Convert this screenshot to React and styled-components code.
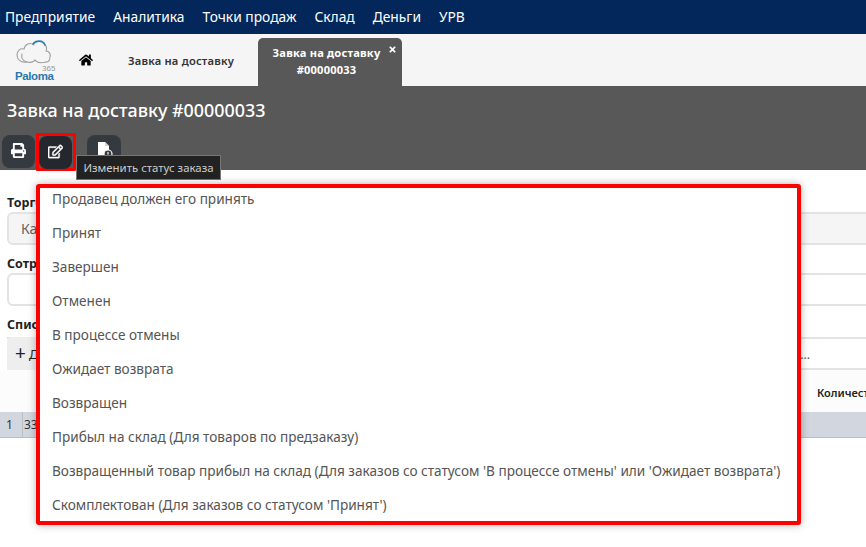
import styled, { createGlobalStyle } from 'styled-components';
import { FaHome, FaPrint, FaRegEdit, FaTimes } from 'react-icons/fa';

const NAV_ITEMS = ['Предприятие', 'Аналитика', 'Точки продаж', 'Склад', 'Деньги', 'УРВ'];

const STATUSES = [
  'Продавец должен его принять',
  'Принят',
  'Завершен',
  'Отменен',
  'В процессе отмены',
  'Ожидает возврата',
  'Возвращен',
  'Прибыл на склад (Для товаров по предзаказу)',
  "Возвращенный товар прибыл на склад (Для заказов со статусом 'В процессе отмены' или 'Ожидает возврата')",
  "Скомплектован (Для заказов со статусом 'Принят')",
];

const GlobalStyle = createGlobalStyle`
  html, body {
    margin: 0;
    height: 100%;
    background: #fff;
    overflow: hidden;
  }

  body {
    font-family: 'Noto Sans', 'Open Sans', sans-serif;
  }

  * {
    box-sizing: border-box;
  }
`;

const Page = styled.div`
  position: relative;
  width: 866px;
  height: 547px;
  overflow: hidden;
`;

const TopNav = styled.nav`
  display: flex;
  align-items: center;
  gap: 18px;
  height: 34px;
  padding: 0 5px;
  background: #03275a;
`;

const NavLink = styled.a`
  color: #fff;
  font-size: 13.8px;
  line-height: 1;
`;

const TabBar = styled.div`
  display: flex;
  align-items: flex-end;
  height: 52px;
  background: #f5f5f5;
`;

const LogoBox = styled.div`
  display: flex;
  width: 68px;
  height: 100%;
  padding: 6px 0 0 14px;
`;

const HomeTab = styled.a`
  display: flex;
  align-items: center;
  justify-content: center;
  width: 36px;
  height: 100%;
  color: #000;
  font-size: 14px;
`;

const Tab = styled.a`
  display: flex;
  align-items: center;
  justify-content: center;
  width: 154px;
  height: 100%;
  color: #333;
  font-size: 11.2px;
  font-weight: 600;
  letter-spacing: 0.2px;
`;

const ActiveTab = styled.a`
  position: relative;
  width: 144px;
  height: 48px;
  padding: 6px 7px 0 0;
  border-radius: 5px 5px 0 0;
  background: #585858;
  color: #fff;
  font-size: 11.1px;
  font-weight: 700;
  line-height: 17px;
  letter-spacing: 0.2px;
  text-align: center;
`;

const TabClose = styled.span`
  position: absolute;
  top: 7px;
  right: 5px;
  display: flex;
  color: #fff;
  font-size: 9px;
`;

const Header = styled.header`
  height: 84px;
  padding: 12px 0 0 2px;
  background: #585858;
`;

const Title = styled.h1`
  margin: 0 0 13px 5px;
  color: #fff;
  font-size: 17.9px;
  font-weight: 500;
  line-height: 24px;
`;

const Toolbar = styled.div`
  display: flex;
  align-items: flex-start;
`;

const ToolButton = styled.button`
  display: flex;
  align-items: center;
  justify-content: center;
  flex: none;
  width: ${props => props.$width || 33}px;
  height: 33px;
  margin-left: ${props => props.$gapBefore || 0}px;
  padding: 0 0 3px;
  border: none;
  border-radius: 8px;
  background: ${props => (props.$active ? '#24282e' : '#343a40')};
  color: #fff;
  font-size: 15px;
`;

const HighlightFrame = styled.span`
  display: flex;
  flex: none;
  width: 40px;
  height: 38px;
  margin: -2px 0 0 1px;
  border: 3px solid #f00;
  border-radius: 1px;
`;

const EditIcon = styled(FaRegEdit)`
  stroke: currentColor;
  stroke-width: 14px;
`;

const Form = styled.main`
  padding: 27px 0 0 7px;
`;

const FieldLabel = styled.label`
  display: block;
  height: 15px;
  color: #222;
  font-size: 12.5px;
  font-weight: 700;
  line-height: 12px;
  white-space: nowrap;
`;

const Input = styled.div`
  display: flex;
  align-items: center;
  height: 33px;
  margin: 0 -10px 13px 0;
  padding-left: 12px;
  border: 2px solid #e3e3e3;
  border-radius: 6px;
  background: ${props => (props.$filled ? '#f5f5f5' : '#fff')};
  color: #666;
  font-size: 14px;
`;

const SearchRow = styled.div`
  display: flex;
  height: 33px;
  margin-top: 3px;
  border-bottom: 2px solid #e3e3e3;
  border-top: 2px solid #e3e3e3;
`;

const AddButton = styled.button`
  display: flex;
  align-items: center;
  gap: 3px;
  width: 100px;
  margin: -2px 0;
  padding: 0 8px;
  border: none;
  border-radius: 5px 5px 0 0;
  background: #eee;
  color: #222;
  font-family: inherit;
  font-size: 13px;
`;

const PlusSign = styled.span`
  font-size: 19px;
  line-height: 1;
`;

const SearchHint = styled.span`
  margin-left: auto;
  padding: 7px 56px 0 0;
  color: #555;
  font-size: 12px;
`;

const TableHead = styled.div`
  display: flex;
  justify-content: flex-end;
  height: 42px;
  margin-left: -7px;
  padding-top: 15px;
  background: #fcfcfc;
  color: #222;
  font-size: 11px;
  font-weight: 600;
  white-space: nowrap;
`;

const HeadCell = styled.span`
  width: 49px;
  overflow: hidden;
`;

const TableRow = styled.div`
  display: flex;
  height: 26px;
  margin-left: -7px;
  border-bottom: 1px solid #b9bec7;
  background: #d2d6de;
  color: #333;
  font-size: 12px;
  line-height: 25px;
`;

const RowCell = styled.span`
  width: ${props => props.$width}px;
  padding-left: ${props => props.$pad}px;
  border-left: ${props => (props.$divided ? '1px solid #b9bec7' : 'none')};
`;

const Tooltip = styled.div`
  position: absolute;
  top: 155px;
  left: 76px;
  width: 145px;
  height: 25px;
  border: 1px solid #777;
  background: #222;
  color: #ccc;
  font-size: 11.4px;
  line-height: 23px;
  text-align: center;
  white-space: nowrap;
`;

const StatusMenu = styled.ul`
  position: absolute;
  top: 184px;
  left: 36px;
  width: 765px;
  height: 341px;
  margin: 0;
  padding: 0;
  overflow: hidden;
  list-style: none;
  border: 4px solid #f00;
  border-radius: 3px;
  background: #fff;
  box-shadow: 0 0 8px rgba(0, 0, 0, 0.3);
`;

const StatusItem = styled.li`
  height: 34px;
  padding-left: 12px;
  color: #555;
  font-size: 13.6px;
  line-height: 34px;
  white-space: nowrap;

  &:first-child {
    margin-top: -6px;
  }
`;

const PalomaLogo = () => (
  <svg width="42" height="42" viewBox="0 0 42 42">
    <g fill="none" strokeLinecap="round">
      <path
        d="M13 22C6 23 3 19 3 15C3 11 6 8 10 9C11 4 16 2 20 5M31 5C33 7 33 9 32 11C35 11 37 14 36 17C36 20 35 22 32 22"
        stroke="#a0a0a0"
        strokeWidth="1.1"
      />
      <path
        d="M8 14C7 18 9 21 13 22C16 23 20 22 21 20C23 23 28 23 32 22"
        stroke="#a0a0a0"
        strokeWidth="1.1"
      />
      <path d="M19 4C22 0 29 0 31 5" stroke="#2f7fb0" strokeWidth="1.6" />
    </g>
    <text x="28" y="31" fill="#999" fontFamily="Liberation Sans, sans-serif" fontSize="8">
      365
    </text>
    <text
      x="1"
      y="40"
      fill="#2a79ad"
      fontFamily="Liberation Sans, sans-serif"
      fontSize="11.5"
      fontWeight="700"
      letterSpacing="-0.4"
    >
      Paloma
    </text>
  </svg>
);

const FileClockIcon = () => (
  <svg width="18" height="18" viewBox="0 0 18 18">
    <path d="M3 1h7l4 4v11H3z" fill="#fff" />
    <path d="M10 1v4h4" fill="#cfd3d8" />
    <circle cx="13" cy="13" r="4" fill="#343a40" stroke="#fff" strokeWidth="1.2" />
    <path d="M13 11v2.5" stroke="#fff" strokeWidth="1.2" />
  </svg>
);

const App = () => (
  <Page>
    <GlobalStyle />
    <TopNav>
      {NAV_ITEMS.map(item => (
        <NavLink key={item}>{item}</NavLink>
      ))}
    </TopNav>

    <TabBar>
      <LogoBox>
        <PalomaLogo />
      </LogoBox>
      <HomeTab>
        <FaHome />
      </HomeTab>
      <Tab>Завка на доставку</Tab>
      <ActiveTab>
        Завка на доставку
        <br />
        #00000033
        <TabClose>
          <FaTimes />
        </TabClose>
      </ActiveTab>
    </TabBar>

    <Header>
      <Title>Завка на доставку #00000033</Title>
      <Toolbar>
        <ToolButton>
          <FaPrint />
        </ToolButton>
        <HighlightFrame>
          <ToolButton $active>
            <EditIcon />
          </ToolButton>
        </HighlightFrame>
        <ToolButton $width={34} $gapBefore={11}>
          <FileClockIcon />
        </ToolButton>
      </Toolbar>
    </Header>

    <Form>
      <FieldLabel>Торговая точка</FieldLabel>
      <Input $filled>Касса</Input>
      <FieldLabel>Сотрудник</FieldLabel>
      <Input />
      <FieldLabel>Список товаров</FieldLabel>
      <SearchRow>
        <AddButton>
          <PlusSign>+</PlusSign> Добавить
        </AddButton>
        <SearchHint>...</SearchHint>
      </SearchRow>
      <TableHead>
        <HeadCell>Количество</HeadCell>
      </TableHead>
      <TableRow>
        <RowCell $width={22} $pad={6}>
          1
        </RowCell>
        <RowCell $width={60} $pad={1} $divided>
          33
        </RowCell>
      </TableRow>
    </Form>

    <Tooltip>Изменить статус заказа</Tooltip>

    <StatusMenu>
      {STATUSES.map(status => (
        <StatusItem key={status}>{status}</StatusItem>
      ))}
    </StatusMenu>
  </Page>
);

export default App;
